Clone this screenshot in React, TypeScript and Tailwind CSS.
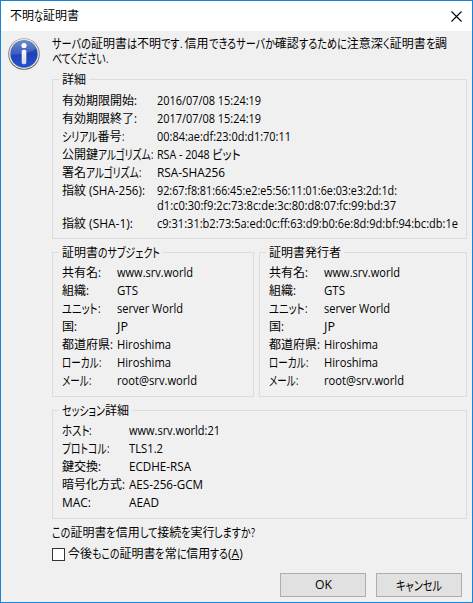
import { useLayoutEffect, useRef } from "react";

type FitProps = { text: string; w: number; className?: string };

// Sets text at a given width: kanji keep their full square, other characters condense.
function Fit({ text, w, className = "" }: FitProps) {
  const ref = useRef<HTMLSpanElement>(null);
  const runs =
    text.match(/[\u4e00-\u9fff]+|[\u3040-\u30ff]+|[^\u3040-\u30ff\u4e00-\u9fff]+/g) ?? [];

  useLayoutEffect(() => {
    const root = ref.current;
    if (!root) return;
    const soft = Array.from(root.querySelectorAll<HTMLElement>("[data-soft]"));
    soft.forEach((s) => {
      s.style.marginRight = "";
      s.style.transform = "";
    });
    const total = root.getBoundingClientRect().width;
    const widths = soft.map((s) => s.getBoundingClientRect().width);
    const sum = widths.reduce((a, b) => a + b, 0);
    if (sum === 0) return;
    const k = (w - (total - sum)) / sum;
    soft.forEach((s, i) => {
      s.style.transform = `scaleX(${k})`;
      s.style.marginRight = `${widths[i] * (k - 1)}px`;
    });
  }, [text, w]);

  return (
    <span ref={ref} className={`inline-flex w-max items-baseline whitespace-pre ${className}`}>
      {runs.map((r, i) => {
        if (/[\u4e00-\u9fff]/.test(r)) return <span key={i}>{r}</span>;
        const kana = /[\u3040-\u30ff]/.test(r);
        return (
          <span
            key={i}
            data-soft
            className={kana ? "origin-left text-[13px] leading-none" : "origin-left"}
          >
            {r}
          </span>
        );
      })}
    </span>
  );
}

type Item = [string, number, string, number];

const details: Item[] = [
  ["有効期限開始:", 75, "2016/07/08 15:24:19", 104],
  ["有効期限終了:", 75, "2017/07/08 15:24:19", 104],
  ["シリアル番号:", 62, "00:84:ae:df:23:0d:d1:70:11", 134],
  ["公開鍵アルゴリズム:", 91, "RSA - 2048 ビット", 84],
  ["署名アルゴリズム:", 79, "RSA-SHA256", 68],
];

const party: Item[] = [
  ["共有名:", 39, "www.srv.world", 76],
  ["組織:", 27, "GTS", 21],
  ["ユニット:", 38, "server World", 66],
  ["国:", 15, "JP", 11],
  ["都道府県:", 51, "Hiroshima", 54],
  ["ローカル:", 39, "Hiroshima", 54],
  ["メール:", 29, "root@srv.world", 80],
];

const session: Item[] = [
  ["ホスト:", 30, "www.srv.world:21", 91],
  ["プロトコル:", 47, "TLS1.2", 34],
  ["鍵交換:", 39, "ECDHE-RSA", 62],
  ["暗号化方式:", 63, "AES-256-GCM", 74],
  ["MAC:", 29, "AEAD", 30],
];

function Rows({ items, col }: { items: Item[]; col: string }) {
  return (
    <>
      {items.map(([label, lw, value, vw]) => (
        <div key={label} className="flex h-[18px] items-center leading-[18px]">
          <div className={`flex shrink-0 ${col}`}>
            <Fit text={label} w={lw} className="h-[18px]" />
          </div>
          <Fit text={value} w={vw} className="h-[18px]" />
        </div>
      ))}
    </>
  );
}

function Group({
  title,
  tw,
  className,
  children,
}: {
  title: string;
  tw: number;
  className: string;
  children: React.ReactNode;
}) {
  return (
    <section className={`border border-[#dcdcdc] pl-[9px] ${className}`}>
      <h2 className="-mt-[9px] -ml-[3px] flex h-[18px] w-max items-center bg-[#f0f0f0] px-[3px] leading-[18px]">
        <Fit text={title} w={tw} />
      </h2>
      {children}
    </section>
  );
}

function InfoIcon() {
  return (
    <svg viewBox="0 0 32 32" className="size-8 shrink-0">
      <defs>
        <linearGradient id="ring" x1="0" y1="0" x2="0" y2="1">
          <stop offset="0" stopColor="#a8a8a8" />
          <stop offset="1" stopColor="#555" />
        </linearGradient>
        <linearGradient id="ball" x1="0" y1="0" x2="0" y2="1">
          <stop offset="0" stopColor="#3560c0" />
          <stop offset="0.5" stopColor="#1d43b4" />
          <stop offset="1" stopColor="#2350d4" />
        </linearGradient>
        <linearGradient id="shine" x1="0" y1="0" x2="0" y2="1">
          <stop offset="0" stopColor="#fff" stopOpacity="0.25" />
          <stop offset="1" stopColor="#fff" stopOpacity="0.12" />
        </linearGradient>
        <linearGradient id="stem" x1="0" y1="0" x2="0" y2="1">
          <stop offset="0" stopColor="#fff" />
          <stop offset="1" stopColor="#d4d8e2" />
        </linearGradient>
      </defs>
      <circle cx="16" cy="16" r="15.8" fill="url(#ring)" />
      <circle cx="16" cy="16" r="14.9" fill="#e9e9e9" />
      <circle cx="16" cy="16" r="13.7" fill="#5068a0" />
      <circle cx="16" cy="16" r="13.2" fill="url(#ball)" />
      <path d="M2.8 17A13.2 13.2 0 0 1 28 10.5Q22 16 2.8 17Z" fill="url(#shine)" />
      <circle cx="16" cy="7.5" r="2.6" fill="#fff" />
      <rect x="13.7" y="11.8" width="4.6" height="14.4" rx="1.6" fill="url(#stem)" />
    </svg>
  );
}

export default function App() {
  return (
    <div
      lang="ja"
      className="flex h-[603px] w-[473px] flex-col border border-[#1883d7] bg-[#f0f0f0] font-['Open_Sans','Noto_Sans_CJK_JP',sans-serif] text-[12px] text-black [font-feature-settings:'palt']"
    >
      <header className="flex h-[30px] shrink-0 items-center justify-between bg-white pr-[10px] pl-[9px]">
        <Fit text="不明な証明書" w={69} />
        <svg viewBox="0 0 11 11" className="size-[11px]" stroke="#000" strokeWidth="1.1">
          <path d="M0.5 0.5L10.5 10.5M10.5 0.5L0.5 10.5" />
        </svg>
      </header>

      <div className="flex pt-[5px] pl-[7px]">
        <div className="w-11 shrink-0 pt-[2px]">
          <InfoIcon />
        </div>
        <div className="flex w-[415px] flex-col">
          <div className="flex h-[43px] flex-col leading-[15px]">
            <Fit
              className="h-[15px]"
              text="サーバの証明書は不明です. 信用できるサーバか確認するために注意深く証明書を調"
              w={395}
            />
            <Fit className="h-[15px]" text="べてください." w={56} />
          </div>

          <Group title="詳細" tw={24} className="h-[160px]">
            <div className="pt-[3px]">
              <Rows items={details} col="w-[95px]" />
              <div className="flex">
                <div className="w-[95px] shrink-0 leading-[18px]">
                  <Fit text="指紋 (SHA-256):" w={83} />
                </div>
                <div className="flex h-[33px] flex-col pt-px leading-[15px]">
                  <Fit
                    className="h-[15px]"
                    text="92:67:f8:81:66:45:e2:e5:56:11:01:6e:03:e3:2d:1d:"
                    w={240}
                  />
                  <Fit
                    className="h-[15px]"
                    text="d1:c0:30:f9:2c:73:8c:de:3c:80:d8:07:fc:99:bd:37"
                    w={239}
                  />
                </div>
              </div>
              <Rows
                items={[
                  [
                    "指紋 (SHA-1):",
                    71,
                    "c9:31:31:b2:73:5a:ed:0c:ff:63:d9:b0:6e:8d:9d:bf:94:bc:db:1e",
                    301,
                  ],
                ]}
                col="w-[95px]"
              />
            </div>
          </Group>

          <div className="mt-[13px] flex gap-[5px]">
            <Group title="証明書のサブジェクト" tw={98} className="h-[145px] w-[202px]">
              <div className="pt-[2px]">
                <Rows items={party} col="w-[55px]" />
              </div>
            </Group>
            <Group title="証明書発行者" tw={72} className="h-[145px] w-[208px]">
              <div className="pt-[2px]">
                <Rows items={party} col="w-[55px]" />
              </div>
            </Group>
          </div>

          <Group title="セッション詳細" tw={67} className="mt-[13px] h-[109px]">
            <div className="pt-[2px]">
              <Rows items={session} col="w-[67px]" />
            </div>
          </Group>

          <p className="mt-[5px] flex h-[18px] items-center leading-[18px]">
            <Fit text="この証明書を信用して接続を実行しますか?" w={203} />
          </p>
          <label className="mt-[2px] flex h-[20px] items-center leading-[20px]">
            <span className="mr-[3px] size-[13px] border border-[#333] bg-white" />
            <Fit text="今後もこの証明書を常に信用する" w={160} />
            <span>
              (<span className="underline underline-offset-1">A</span>)
            </span>
          </label>
        </div>
      </div>

      <footer className="mt-[9px] flex gap-[10px] pl-[279px]">
        <button className="flex h-6 w-[86px] items-center justify-center border border-[#adadad] bg-[#e1e1e1]">
          <Fit text="OK" w={17} />
        </button>
        <button className="flex h-6 w-[86px] items-center justify-center border border-[#adadad] bg-[#e1e1e1]">
          <Fit text="キャンセル" w={46} />
        </button>
      </footer>
    </div>
  );
}
